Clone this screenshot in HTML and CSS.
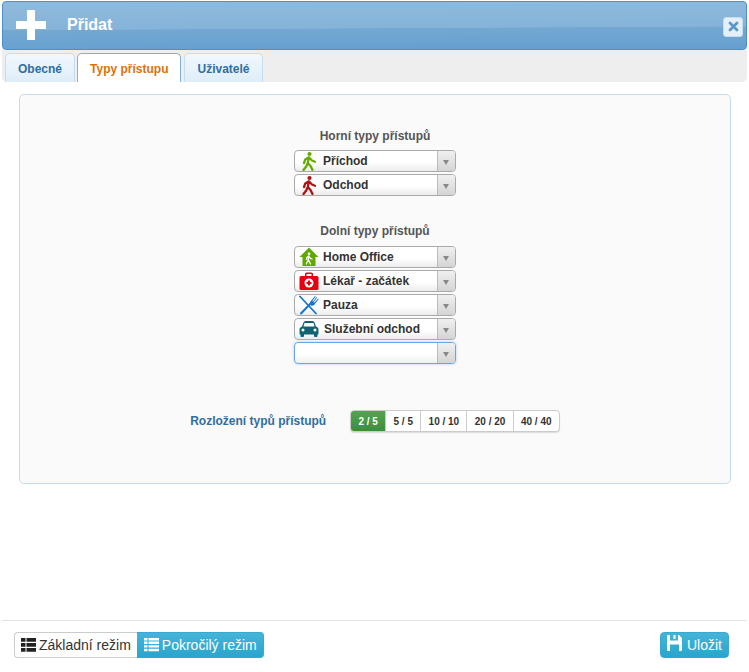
FILE: index.html
```html
<!DOCTYPE html>
<html lang="cs">
<head>
<meta charset="utf-8">
<title>Přidat</title>
<link rel="stylesheet" href="styles.css">
</head>
<body>
<div class="dialog">
  <header class="titlebar">
    <svg class="plus" width="30" height="30" viewBox="0 0 30 30"><path d="M11 .5a.5.5 0 0 1 .5-.5h7a.5.500 0 0 1 .5.500V11h10.500a.5.500 0 0 1 .5.500v7a.5.500 0 0 1-.5.500H19v10.500a.5.500 0 0 1-.5.500h-7a.5.500 0 0 1-.5-.500V19H.5a.5.500 0 0 1-.5-.500v-7a.5.500 0 0 1 .5-.500H11z" fill="#fff"/></svg>
    <span class="title">Přidat</span>
    <span class="close"><svg width="11" height="11" viewBox="0 0 11 11"><path d="M2 2l7 7M9 2l-7 7" stroke="#5d98c8" stroke-width="2.800" stroke-linecap="round"/></svg></span>
  </header>
  <nav class="tabs">
    <a class="tab">Obecné</a>
    <a class="tab active">Typy přístupu</a>
    <a class="tab">Uživatelé</a>
  </nav>
  <main class="content">
    <section class="panel">
      <h3 class="group-title first">Horní typy přístupů</h3>
      <div class="select"><span class="sel-icon"><svg width="20" height="20" viewBox="0 0 20 20"><circle cx="10.500" cy="3" r="2.100" fill="#62ad00"/><path d="M9.800 6.500L8.800 12M8.800 12l-1.600 3.500L4.500 19M8.800 12l2.700 3 2 4M10 6.500l3 3 3 1.200M9.500 6.500L6.300 8.500 5 12" stroke="#62ad00" stroke-width="2.300" fill="none" stroke-linecap="round" stroke-linejoin="round"/></svg></span><span class="sel-text">Příchod</span><span class="sel-arrow"></span></div>
      <div class="select"><span class="sel-icon"><svg width="20" height="20" viewBox="0 0 20 20"><circle cx="10.500" cy="3" r="2.100" fill="#b01212"/><path d="M9.800 6.500L8.800 12M8.800 12l-1.600 3.500L4.500 19M8.800 12l2.700 3 2 4M10 6.500l3 3 3 1.200M9.500 6.500L6.300 8.500 5 12" stroke="#b01212" stroke-width="2.300" fill="none" stroke-linecap="round" stroke-linejoin="round"/></svg></span><span class="sel-text">Odchod</span><span class="sel-arrow"></span></div>
      <h3 class="group-title second">Dolní typy přístupů</h3>
      <div class="select"><span class="sel-icon"><svg width="20" height="20" viewBox="0 0 20 20"><path d="M10 .5L.5 10h3v9h13v-9h3z" fill="#5fa800"/><circle cx="10" cy="6.800" r="1.400" fill="#fff"/><path d="M9.800 9l-.5 3.500M9.300 12.500l-2 4.500M9.300 12.500l2.200 4.500M9.800 9.300l1.700 2 1.500.7M9.600 9.300L8 10.300l-.6 2" stroke="#fff" stroke-width="1.300" fill="none" stroke-linecap="round" stroke-linejoin="round"/></svg></span><span class="sel-text">Home Office</span><span class="sel-arrow"></span></div>
      <div class="select"><span class="sel-icon"><svg width="20" height="20" viewBox="0 0 20 20"><path d="M6 5V3a1.500 1.500 0 0 1 1.500-1.500h5A1.500 1.500 0 0 1 14 3v2h-1.500V3h-5v2z" fill="#e8000f"/><rect x=".5" y="5" width="19" height="14" rx="1.500" fill="#e8000f"/><circle cx="10" cy="12" r="4.500" fill="#fff"/><path d="M9 9.500h2V11h1.500v2H11v1.500H9V13H7.500v-2H9z" fill="#e8000f"/></svg></span><span class="sel-text">Lékař - začátek</span><span class="sel-arrow"></span></div>
      <div class="select"><span class="sel-icon"><svg width="20" height="20" viewBox="0 0 20 20"><path d="M1 1.500l16 17" stroke="#1874cd" stroke-width="1.800" stroke-linecap="round"/><path d="M2 18.500l10-10.500" stroke="#1874cd" stroke-width="2" stroke-linecap="round"/><path d="M11 7l5-6 .7.600-3.400 4.400.7.600L17.500 2l.7.600-3.700 4.600.7.600 4-4.200.4.600-4.500 5.800c-1 1-2.500 1-3.500.2z" fill="#1874cd"/></svg></span><span class="sel-text">Pauza</span><span class="sel-arrow"></span></div>
      <div class="select"><span class="sel-icon"><svg width="20" height="20" viewBox="0 0 20 20"><path d="M4.500 3.500C5 2.500 6 2 7 2h6c1 0 2 .5 2.500 1.500L17 7.500c1.500.5 2.500 1.500 2.500 3v4c0 .5-.5 1-1 1v1.500a1 1 0 0 1-1 1h-1.500a1 1 0 0 1-1-1v-1.500H5v1.500a1 1 0 0 1-1 1H2.500a1 1 0 0 1-1-1v-1.500c-.5 0-1-.5-1-1v-4c0-1.500 1-2.500 2.500-3z" fill="#0f6474"/><path d="M5.500 4h9l1 3.500h-11z" fill="#fff"/><circle cx="4" cy="11" r="1.500" fill="#fff"/><circle cx="16" cy="11" r="1.500" fill="#fff"/></svg></span><span class="sel-text wide">Služební odchod</span><span class="sel-arrow"></span></div>
      <div class="select focused"><span class="sel-text"></span><span class="sel-arrow"></span></div>
      <div class="layout-row">
        <span class="layout-label">Rozložení typů přístupů</span>
        <div class="btn-group">
          <span class="seg on">2 / 5</span><span class="seg">5 / 5</span><span class="seg">10 / 10</span><span class="seg">20 / 20</span><span class="seg">40 / 40</span>
        </div>
      </div>
    </section>
  </main>
  <footer class="footer">
    <div class="mode-group">
      <span class="mode"><svg width="15" height="14" viewBox="0 0 15 14"><path d="M0 0h4.500v3.700H0zM5.500 0H15v3.700H5.500zM0 5h4.500v3.700H0zM5.500 5H15v3.700H5.500zM0 10h4.500v3.700H0zM5.500 10H15v3.700H5.500z" fill="#222"/></svg>Základní režim</span><span class="mode on"><svg width="15" height="14" viewBox="0 0 15 14"><path d="M0 0h3.500v2.400H0zM4.500 0H15v2.400H4.500zM0 3.600h3.500V6H0zM4.500 3.600H15V6H4.500zM0 7.200h3.500v2.400H0zM4.500 7.200H15v2.400H4.500zM0 10.800h3.500v2.400H0zM4.500 10.800H15v2.400H4.500z" fill="#fff"/></svg>Pokročilý režim</span>
    </div>
    <span class="save"><svg width="15" height="16" viewBox="0 0 15 16"><path d="M1 0h11l3 3v12a1 1 0 0 1-1 1H1a1 1 0 0 1-1-1V1a1 1 0 0 1 1-1zm2 0v5.500h8V0H8.500v4H6.500V0zM3 9.500V16h9V9.500z" fill="#fff" fill-rule="evenodd"/></svg>Uložit</span>
  </footer>
</div>
</body>
</html>
```
FILE: styles.css
```css
* { box-sizing: border-box; }
html, body { margin: 0; padding: 0; background: #fff; }
body { font-family: "Liberation Sans", Arial, sans-serif; width: 749px; height: 672px; overflow: hidden; }
.dialog { display: flex; flex-direction: column; height: 672px; padding: 1px 2px 0; }
.titlebar {
  height: 49px; display: flex; align-items: center; padding: 0 3px 0 13px;
  border: 1px solid #4e8fc7; border-radius: 4px;
  background: linear-gradient(179.7deg, #8fbadb 0, #85b3d9 55%, #74a8d2 56%, #659fd0 100%);
}
.plus { margin-top: -1px; }
.title { margin-left: 21px; font-size: 16px; font-weight: bold; color: #fff; margin-top: -2px; }
.close {
  margin-left: auto; margin-top: 2px; width: 20px; height: 20px; display: flex; align-items: center; justify-content: center;
  background: #e3eff9; border: 1px solid #c5dcef; border-radius: 3px;
}
.tabs {
  height: 32px; display: flex; align-items: flex-end; padding: 0 0 0 3px; gap: 2px;
  background: #eee; border-radius: 0 0 5px 5px;
}
.tab {
  height: 29px; padding: 8px 12px 0; font-size: 12px; font-weight: bold; color: #2e6ea5;
  border: 1px solid #c6dcef; border-bottom: 0; border-radius: 5px 5px 0 0;
  background: linear-gradient(#f2f8fd, #deedf9);
}
.tab.active { color: #e17009; background: #fff; border-color: #7eb0d8; margin-right: 1px; }
.content { flex: 1; padding: 12px 16px 0 17px; }
.panel {
  height: 390px; background: #fafafa; border: 1px solid #c5dcef; border-radius: 5px;
  display: flex; flex-direction: column; align-items: center;
}
.group-title { margin: 0; font-size: 12px; font-weight: bold; color: #555; line-height: 14px; }
.group-title.first { margin-top: 34px; margin-bottom: 7px; }
.group-title.second { margin-top: 26px; margin-bottom: 8px; }
.select {
  width: 162px; height: 22px; margin-bottom: 2px; display: flex; align-items: center;
  border: 1px solid #aaa; border-radius: 4px;
  background: linear-gradient(#fff 55%, #ececec);
}
.select.focused { border-color: #69a5ec; box-shadow: 0 0 3px #a8cdf3; background: linear-gradient(#fff 55%, #f0f0f0); }
.sel-icon { width: 20px; height: 20px; margin-left: 4px; flex: none; display: flex; }
.sel-text { flex: 1; padding-left: 4px; font-size: 12px; font-weight: bold; color: #333; }
.sel-text.wide { padding-left: 5px; }
.sel-arrow {
  width: 18px; height: 20px; flex: none; position: relative;
  border-left: 1px solid #bbb; background: linear-gradient(#f0f0f0, #d4d4d4); border-radius: 0 3px 3px 0;
}
.sel-arrow::after {
  content: ""; position: absolute; left: 5px; top: 9px;
  border: 3.500px solid transparent; border-top: 5px solid #888; border-bottom: 0;
}
.layout-row { display: flex; align-items: center; margin-top: 44px; }
.layout-label { font-size: 12px; font-weight: bold; color: #2e6ea5; width: 160px; }
.btn-group { display: flex; border: 1px solid #ccc; border-radius: 4px; background: #fff; box-shadow: 0 1px 1px #ddd; overflow: hidden; }
.seg { height: 20px; line-height: 21px; padding: 0 7.300px; font-size: 10px; font-weight: bold; color: #333; text-align: center; border-left: 1px solid #ccc; }
.seg:first-child { border-left: 0; }
.seg.on { background: linear-gradient(#52a452, #3b8f3b); color: #fff; }
.footer {
  height: 52px; border-top: 1px solid #e2e2e2; display: flex; justify-content: space-between;
  align-items: flex-start; padding: 11px 18px 0 12px;
}
.mode-group { display: flex; height: 26px; }
.mode {
  display: flex; align-items: center; gap: 3px; height: 26px; padding: 0 6px; font-size: 14px; color: #333;
  border: 1px solid #ccc; border-right: 0; border-radius: 4px 0 0 4px; background: #fff;
}
.mode.on { gap: 3px; padding: 0 6px 0 7px; color: #fff; border: 1px solid #38a9cf; border-left: 0; border-radius: 0 4px 4px 0; background: linear-gradient(#45b4d8, #2aa5cd); }
.save {
  display: flex; align-items: center; gap: 5px; height: 26px; padding: 0 6px; font-size: 14px; color: #fff;
  border: 1px solid #38a9cf; border-radius: 4px; background: linear-gradient(#45b4d8, #2aa5cd);
}
.save svg { margin-top: -4px; }
```
